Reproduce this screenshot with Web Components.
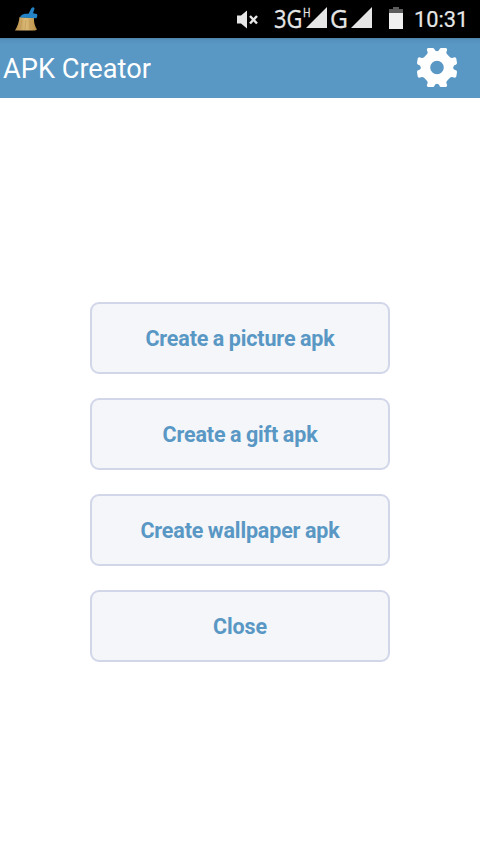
<!DOCTYPE html>
<html lang="en">
<head>
<meta charset="utf-8">
<title>APK Creator</title>
<style>
  html, body {
    margin: 0;
    height: 100%;
    overflow: hidden;
    background: #fff;
    font-family: Roboto, "Liberation Sans", sans-serif;
  }
</style>
</head>
<body>
<apk-app>
  <status-bar slot="status" time="10:31"></status-bar>
  <title-bar slot="title">APK Creator</title-bar>
  <menu-button>Create a picture apk</menu-button>
  <menu-button>Create a gift apk</menu-button>
  <menu-button>Create wallpaper apk</menu-button>
  <menu-button>Close</menu-button>
</apk-app>

<script>
// page shell: bars on top, the menu centered in what is left
class ApkApp extends HTMLElement {
  constructor() {
    super();
    this.attachShadow({ mode: 'open' });
    this.shadowRoot.innerHTML = `
      <style>
        :host {
          display: flex;
          flex-direction: column;
          height: 100vh;
        }
        main {
          flex: 1;
          display: flex;
          flex-direction: column;
          align-items: center;
          justify-content: center;
          gap: 24px;
          padding-top: 12px;
        }
      </style>
      <slot name="status"></slot>
      <slot name="title"></slot>
      <main><slot></slot></main>
    `;
  }
}

// Android status bar
class StatusBar extends HTMLElement {
  constructor() {
    super();
    this.attachShadow({ mode: 'open' });
    this.shadowRoot.innerHTML = `
      <style>
        :host {
          display: flex;
          align-items: center;
          box-sizing: border-box;
          height: 38px;
          padding: 0 13px 0 14px;
          background: #000;
          color: #e6e6e6;
        }
        svg { display: block; flex: none; overflow: visible; }
        text { font-family: "Open Sans", sans-serif; fill: #e6e6e6; stroke: #e6e6e6; stroke-width: .3px; }
        .mute { margin-left: auto; margin-right: 14px; }
        .battery { margin: 0 11px 0 17px; }
        time {
          font-size: 21.8px;
          line-height: 38px;
          padding-top: 1px;
          width: 53px;
          white-space: nowrap;
          -webkit-text-stroke: .2px #e6e6e6;
        }
      </style>
      <svg width="26" height="38" viewBox="0 0 26 38">
        <defs>
          <linearGradient id="straw" x1="0" x2="1">
            <stop offset="0" stop-color="#b98e48"/>
            <stop offset=".5" stop-color="#dcbb78"/>
            <stop offset="1" stop-color="#b58a40"/>
          </linearGradient>
        </defs>
        <path d="M5.5 17L20 18Q19.5 24 23 29.5L21 30.5H1Q5 24 5.5 17Z" fill="url(#straw)"/>
        <path d="M6 29L8 20M11 30L12 20M16 29L16 20" stroke="#b08a48" stroke-width=".5" fill="none"/>
        <path d="M6 17.5Q7 14.2 11 13.8H14.5L17.5 8Q19.5 6.5 20.6 8.5L19 13.3L23 14Q24 16 22.5 18.2Z" fill="#2383c6"/>
      </svg>
      <svg class="mute" width="22" height="38" viewBox="0 0 22 38">
        <path d="M0 15.5H4L10 10.5V28.5L4 23.5H0Z" fill="#e6e6e6"/>
        <path d="M13 16L20 23.5M20 16L13 23.5" stroke="#e6e6e6" stroke-width="2.4"/>
      </svg>
      <svg width="30" height="38" viewBox="0 0 30 38">
        <text transform="translate(1 27.7) scale(.84 1)" font-size="26">3G</text>
      </svg>
      <svg width="24" height="38" viewBox="0 0 24 38">
        <text transform="translate(0 16.5) scale(.82 1)" font-size="12.5">H</text>
        <path d="M3 28L24 7V28Z" fill="#e6e6e6"/>
      </svg>
      <svg width="24" height="38" viewBox="0 0 24 38">
        <text transform="translate(3 27.7) scale(.95 1)" font-size="26">G</text>
      </svg>
      <svg width="21" height="38" viewBox="0 0 21 38">
        <path d="M0 28L21 7V28Z" fill="#e6e6e6"/>
      </svg>
      <svg class="battery" width="14" height="38" viewBox="0 0 14 38">
        <path d="M0 9H4V7H10V9H14V13H0Z" fill="#5c5c5c"/>
        <path d="M0 13H14V29H0Z" fill="#f0f0f0"/>
      </svg>
      <time></time>
    `;
  }

  connectedCallback() {
    this.shadowRoot.querySelector('time').textContent = this.getAttribute('time');
  }
}

// blue bar with the app name and the settings gear
class TitleBar extends HTMLElement {
  constructor() {
    super();
    this.attachShadow({ mode: 'open' });
    this.shadowRoot.innerHTML = `
      <style>
        :host {
          display: flex;
          align-items: center;
          justify-content: space-between;
          box-sizing: border-box;
          height: 60px;
          padding: 0 23px 0 3px;
          background: linear-gradient(#4d81a8, #5591bd 2px, #5997c4 6px, #5997c4);
          color: #fff;
          font-size: 27.2px;
          white-space: nowrap;
        }
        svg { display: block; }
        span { padding-top: 2px; }
      </style>
      <span><slot></slot></span>
      <svg width="40" height="40" viewBox="-20 -19.5 40 40">
        <path fill="#fff" fill-rule="evenodd" d="
          M-2.4 -18Q-2.8 -19.5 -4 -19.5H-8.6Q-10.2 -19.3 -10.2 -17.8L-9.3 -15.2Q-9.2 -13.8 -10.6 -12.7
          L-12.7 -10.6Q-13.8 -9.4 -15.2 -9.5L-17.6 -10.2Q-18.8 -10.2 -19.3 -9L-20 -4.4Q-20 -3.2 -18.8 -2.8L-17 -2.1Q-15.4 0 -17 2.1
          L-18.8 2.8Q-20 3.2 -20 4.4L-19.3 9Q-18.8 10.2 -17.6 10.2L-15.2 9.5Q-13.8 9.4 -12.7 10.6
          L-10.6 12.7Q-9.2 13.8 -9.3 15.2L-10.2 17.8Q-10.2 19.3 -8.6 19.5H-4Q-2.8 19.5 -2.4 18Q-1.8 16.2 0 16.2
          Q1.8 16.2 2.4 18Q2.8 19.5 4 19.5H8.6Q10.2 19.3 10.2 17.8L9.3 15.2Q9.2 13.8 10.6 12.7
          L12.7 10.6Q13.8 9.4 15.2 9.5L17.6 10.2Q18.8 10.2 19.3 9L20 4.4Q20 3.2 18.8 2.8L17 2.1Q15.4 0 17 -2.1
          L18.8 -2.8Q20 -3.2 20 -4.4L19.3 -9Q18.8 -10.2 17.6 -10.2L15.2 -9.5Q13.8 -9.4 12.7 -10.6
          L10.6 -12.7Q9.2 -13.8 9.3 -15.2L10.2 -17.8Q10.2 -19.3 8.6 -19.5H4Q2.8 -19.5 2.4 -18Q1.8 -16.2 0 -16.2Q-1.8 -16.2 -2.4 -18Z
          M-6.8 0A6.8 6.8 0 1 0 6.8 0A6.8 6.8 0 1 0 -6.8 0Z"/>
      </svg>
    `;
  }
}

class MenuButton extends HTMLElement {
  constructor() {
    super();
    this.attachShadow({ mode: 'open' });
    this.shadowRoot.innerHTML = `
      <style>
        :host { display: block; }
        button {
          display: block;
          box-sizing: border-box;
          width: 300px;
          height: 72px;
          margin: 0;
          padding: 0;
          border: 2px solid #d1d6e9;
          border-radius: 9px;
          background: #f4f6f9;
          color: #5997c4;
          font: bold 21.5px Roboto, "Liberation Sans", sans-serif;
          letter-spacing: -.15px;
          word-spacing: -.6px;
        }
      </style>
      <button type="button"><slot></slot></button>
    `;
  }
}

customElements.define('apk-app', ApkApp);
customElements.define('status-bar', StatusBar);
customElements.define('title-bar', TitleBar);
customElements.define('menu-button', MenuButton);
</script>
</body>
</html>
